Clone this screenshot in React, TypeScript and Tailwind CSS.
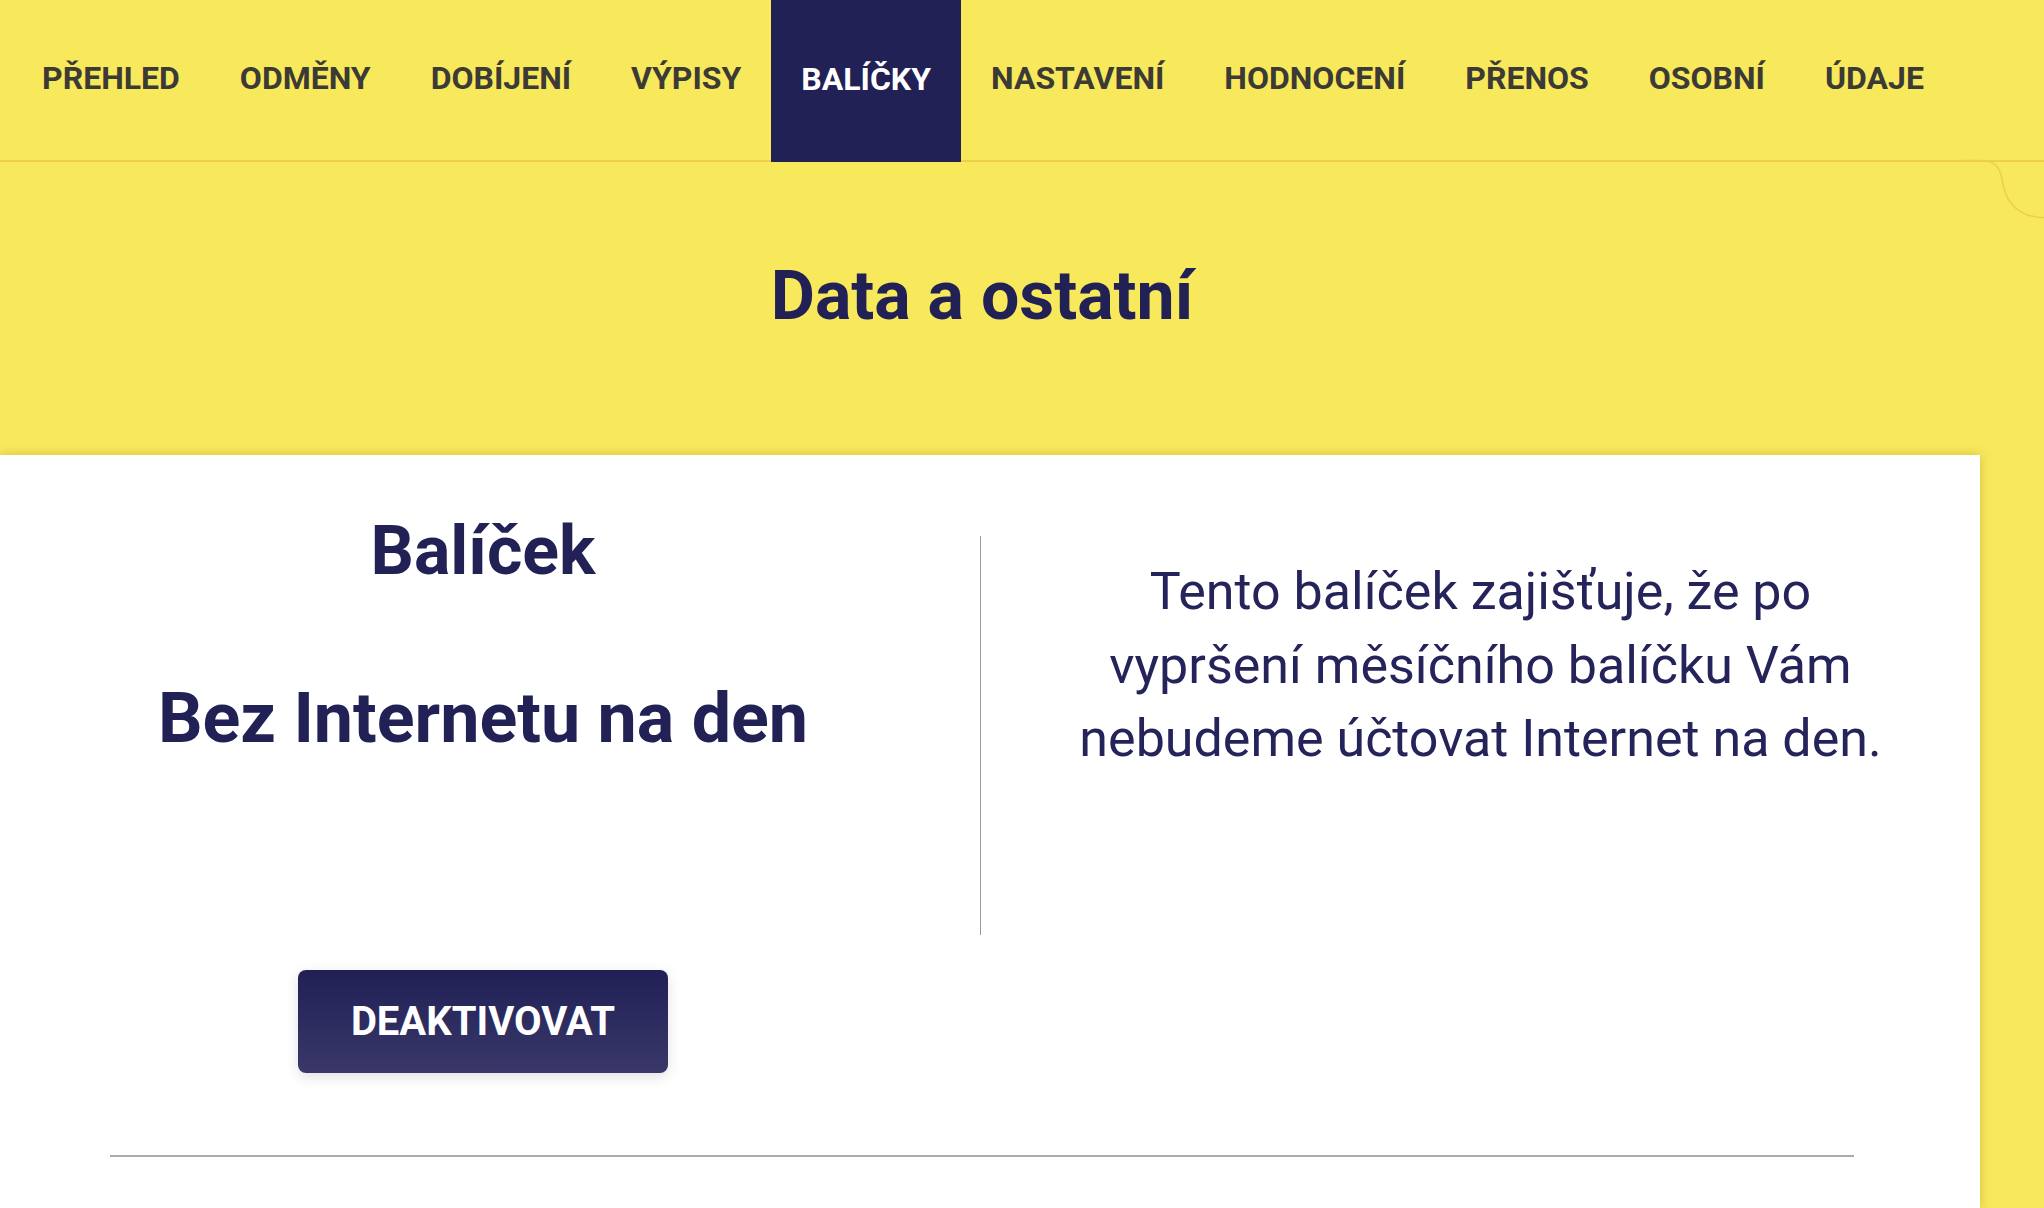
import React from 'react';

const navItems = [
  'PŘEHLED',
  'ODMĚNY',
  'DOBÍJENÍ',
  'VÝPISY',
  'BALÍČKY',
  'NASTAVENÍ',
  'HODNOCENÍ',
  'PŘENOS',
  'OSOBNÍ',
  'ÚDAJE',
];

const TopNav: React.FC<{ active: string }> = ({ active }) => (
  <nav className="relative flex h-[162px] items-stretch border-b-2 border-[#ecd04a] pl-3">
    {navItems.map((item) => (
      <a
        key={item}
        href="#"
        className={
          item === active
            ? 'mb-[-2px] flex items-center bg-[#222155] px-[30px] pb-[4px] text-[32px] font-bold text-white'
            : 'flex items-center px-[30px] pb-[4px] text-[32px] font-bold text-[#3b3a35]'
        }
      >
        {item}
      </a>
    ))}
    {/* the curved edge on the right */}
    <svg
      className="absolute left-[1962px] top-[159px] h-[62px] w-[82px]"
      viewBox="0 0 82 62"
      fill="none"
      aria-hidden
    >
      <path d="M0 1.5 H20 Q37 1.5 40 20 Q45 58 82 58.5" stroke="#ecd04a" strokeWidth={1.5} />
    </svg>
  </nav>
);

const PackageCard: React.FC = () => (
  <section className="w-[1980px] flex-1 bg-white shadow-[0_0_10px_rgba(150,120,0,0.35)]">
    <div className="flex">
      <div className="flex w-[966px] flex-col items-center pt-[62px] text-[#222155]">
        <h2 className="text-[68px] font-bold leading-none">Balíček</h2>
        <h3 className="mt-[98px] text-[70px] font-bold leading-none">Bez Internetu na den</h3>
      </div>
      <div className="ml-[14px] mt-[81px] h-[399px] w-px bg-[#9a9a9a]" />
      <div className="flex flex-1 justify-center pt-[100px]">
        <p className="text-center text-[52px] leading-[73.5px] text-[#25245a]">
          Tento balíček zajišťuje, že po
          <br />
          vypršení měsíčního balíčku Vám
          <br />
          nebudeme účtovat Internet na den.
        </p>
      </div>
    </div>
    <div className="mt-[35px] flex w-[966px] justify-center">
      <button
        type="button"
        className="h-[103px] w-[370px] rounded-[8px] bg-gradient-to-b from-[#212056] to-[#3a3869] text-[40px] font-bold text-white shadow-[0_4px_14px_rgba(0,0,0,0.12)]"
      >
        DEAKTIVOVAT
      </button>
    </div>
    <div className="ml-[110px] mt-[82px] h-[2px] w-[1744px] bg-[#ababab]" />
  </section>
);

export default function App() {
  return (
    <div className="flex h-[1208px] w-[2044px] flex-col overflow-hidden bg-[#f7e85c] font-['Roboto',sans-serif]">
      <TopNav active="BALÍČKY" />
      <div className="flex h-[293px] w-[1964px] justify-center pt-[100px]">
        <h1 className="text-[68px] font-bold leading-none text-[#222155]">Data a ostatní</h1>
      </div>
      <PackageCard />
    </div>
  );
}
